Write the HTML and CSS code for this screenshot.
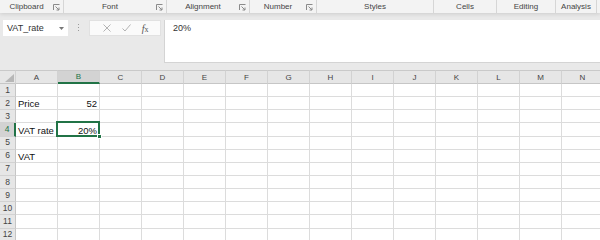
FILE: index.html
```html
<!DOCTYPE html>
<html>
<head>
    <meta charset="utf-8">
    <title>VAT</title>
    <link rel="stylesheet" href="styles.css">
</head>
<body>
    <div class="ribbon">
        <div class="group w-clip"><span class="label">Clipboard</span><svg class="launcher" width="7" height="7" viewBox="0 0 7 7"><path d="M0.5 6V0.5H6.5M2.5 2.5L6 6M6 3.5V6H3.5"/></svg></div>
        <div class="group w-font"><span class="label">Font</span><svg class="launcher" width="7" height="7" viewBox="0 0 7 7"><path d="M0.5 6V0.5H6.5M2.5 2.5L6 6M6 3.5V6H3.5"/></svg></div>
        <div class="group w-align"><span class="label">Alignment</span><svg class="launcher" width="7" height="7" viewBox="0 0 7 7"><path d="M0.5 6V0.5H6.5M2.5 2.5L6 6M6 3.5V6H3.5"/></svg></div>
        <div class="group w-num"><span class="label">Number</span><svg class="launcher" width="7" height="7" viewBox="0 0 7 7"><path d="M0.5 6V0.5H6.5M2.5 2.5L6 6M6 3.5V6H3.5"/></svg></div>
        <div class="group w-styles"><span class="label">Styles</span></div>
        <div class="group w-cells"><span class="label">Cells</span></div>
        <div class="group w-edit"><span class="label">Editing</span></div>
        <div class="group w-anal"><span class="label">Analysis</span></div>
    </div>

    <div class="formula-row">
        <div class="namebox">
            <span>VAT_rate</span>
            <svg width="5" height="3" viewBox="0 0 5 3"><path d="M0 0H5L2.5 3Z" fill="#777"/></svg>
        </div>
        <div class="dots"><i></i><i></i><i></i></div>
        <div class="fbuttons">
            <svg width="8" height="8" viewBox="0 0 8 8"><path d="M0.5 0.5L7.5 7.5M7.5 0.5L0.5 7.5" stroke="#b3b3b3" fill="none"/></svg>
            <svg width="9" height="8" viewBox="0 0 9 8"><path d="M0.5 4.5L3 7L8.5 0.5" stroke="#b3b3b3" fill="none"/></svg>
            <span class="fx"><i>f</i>x</span>
        </div>
        <div class="finput">20%</div>
    </div>

    <div class="sheet">
        <table>
            <colgroup>
                <col class="c-head"><col><col><col><col><col><col><col><col><col><col><col><col><col><col>
            </colgroup>
            <tr class="colhead">
                <td class="corner"><svg width="9" height="8" viewBox="0 0 9 8"><path d="M9 0V8H0Z" fill="#b7b7b7"/></svg></td>
                <td>A</td><td class="on">B</td><td>C</td><td>D</td><td>E</td><td>F</td><td>G</td><td>H</td><td>I</td><td>J</td><td>K</td><td>L</td><td>M</td><td>N</td>
            </tr>
            <tr><td class="rh">1</td><td></td><td></td><td></td><td></td><td></td><td></td><td></td><td></td><td></td><td></td><td></td><td></td><td></td><td></td></tr>
            <tr><td class="rh">2</td><td>Price</td><td class="num">52</td><td></td><td></td><td></td><td></td><td></td><td></td><td></td><td></td><td></td><td></td><td></td><td></td></tr>
            <tr><td class="rh">3</td><td></td><td></td><td></td><td></td><td></td><td></td><td></td><td></td><td></td><td></td><td></td><td></td><td></td><td></td></tr>
            <tr><td class="rh on">4</td><td>VAT rate</td><td class="num sel">20%<div class="selbox"><span class="handle"></span></div></td><td></td><td></td><td></td><td></td><td></td><td></td><td></td><td></td><td></td><td></td><td></td><td></td></tr>
            <tr><td class="rh">5</td><td></td><td></td><td></td><td></td><td></td><td></td><td></td><td></td><td></td><td></td><td></td><td></td><td></td><td></td></tr>
            <tr><td class="rh">6</td><td>VAT</td><td></td><td></td><td></td><td></td><td></td><td></td><td></td><td></td><td></td><td></td><td></td><td></td><td></td></tr>
            <tr><td class="rh">7</td><td></td><td></td><td></td><td></td><td></td><td></td><td></td><td></td><td></td><td></td><td></td><td></td><td></td><td></td></tr>
            <tr><td class="rh">8</td><td></td><td></td><td></td><td></td><td></td><td></td><td></td><td></td><td></td><td></td><td></td><td></td><td></td><td></td></tr>
            <tr><td class="rh">9</td><td></td><td></td><td></td><td></td><td></td><td></td><td></td><td></td><td></td><td></td><td></td><td></td><td></td><td></td></tr>
            <tr><td class="rh">10</td><td></td><td></td><td></td><td></td><td></td><td></td><td></td><td></td><td></td><td></td><td></td><td></td><td></td><td></td></tr>
            <tr><td class="rh">11</td><td></td><td></td><td></td><td></td><td></td><td></td><td></td><td></td><td></td><td></td><td></td><td></td><td></td><td></td></tr>
            <tr><td class="rh">12</td><td></td><td></td><td></td><td></td><td></td><td></td><td></td><td></td><td></td><td></td><td></td><td></td><td></td><td></td></tr>
        </table>
    </div>
</body>
</html>
```

FILE: styles.css
```css
*
{
    margin: 0;
    padding: 0;
    box-sizing: border-box;
}

body
{
    width: 600px;
    height: 240px;
    overflow: hidden;
    background-color: #e9e9e9;
    font-family: "Liberation Sans", Arial, sans-serif;
    color: #222;
}

/* ribbon group labels */
.ribbon
{
    display: flex;
    height: 13px;
    background-color: #f3f3f3;
    box-shadow: 0 1px 4px rgba(0, 0, 0, 0.13);
    position: relative;
}

.group
{
    display: flex;
    align-items: center;
    height: 13px;
    border-right: 1px solid #d6d6d6;
    padding-right: 3px;
}

.group .label
{
    flex: 1;
    text-align: center;
    font-size: 8px;
    color: #444;
    line-height: 13px;
}

.launcher
{
    width: 7px;
    height: 7px;
    margin-top: 1px;
}
.launcher path
{
    stroke: #8a8a8a;
    fill: none;
}

.w-clip { width: 64px; }
.w-font { width: 103px; }
.w-align { width: 83px; }
.w-num { width: 67px; }
.w-styles { width: 117px; padding-right: 0; }
.w-cells { width: 63px; padding-right: 0; }
.w-edit { width: 59px; padding-right: 0; }
.w-anal { width: 41px; padding-right: 0; }

/* formula bar */
.formula-row
{
    display: flex;
    align-items: flex-start;
    height: 43px;
    margin-top: 7px;
    padding-left: 3px;
}

.namebox
{
    display: flex;
    align-items: center;
    justify-content: space-between;
    width: 65px;
    height: 16px;
    padding: 0 4px 0 4px;
    background-color: #fff;
    font-size: 9px;
    color: #333;
}

.dots
{
    display: flex;
    flex-direction: column;
    align-items: center;
    gap: 2px;
    width: 21px;
    padding-top: 4px;
}
.dots i
{
    width: 1px;
    height: 1px;
    background-color: #9a9a9a;
}

.fbuttons
{
    display: flex;
    align-items: center;
    justify-content: space-around;
    width: 72px;
    height: 16px;
    padding: 0 6px 0 8px;
    background-color: #fafafa;
    border: 1px solid #e1e1e1;
}

.fx
{
    font-family: "Liberation Serif", serif;
    font-size: 8px;
    color: #555;
}
.fx i
{
    font-size: 10px;
}

.finput
{
    flex: 1;
    height: 43px;
    margin-left: 3px;
    padding: 3px 8px;
    background-color: #fff;
    border-left: 1px solid #d4d4d4;
    border-bottom: 1px solid #d4d4d4;
    font-size: 9px;
    color: #333;
}

/* worksheet */
.sheet
{
    margin-top: 7px;
    background-color: #fff;
}

table
{
    width: 604px;
    table-layout: fixed;
    border-collapse: separate;
    border-spacing: 0;
}

col
{
    width: 42px;
}
col.c-head
{
    width: 16px;
}

tr
{
    height: 13.15px;
}

td
{
    border-right: 1px solid #dcdcdc;
    border-bottom: 1px solid #dcdcdc;
    font-size: 9.5px;
    line-height: 11px;
    padding: 0 2px;
    vertical-align: bottom;
    white-space: nowrap;
    overflow: visible;
    color: #111;
}

td.num
{
    text-align: right;
}

.colhead
{
    height: 13px;
}
.colhead td
{
    background-color: #e6e6e6;
    border-top: 1px solid #c9c9c9;
    border-right: 1px solid #d2d2d2;
    border-bottom: 1px solid #c6c6c6;
    text-align: center;
    vertical-align: middle;
    font-size: 8px;
    color: #444;
}
.colhead td.on
{
    background-color: #d3d3d3;
    border-bottom: 2px solid #217346;
    color: #217346;
}

td.corner
{
    text-align: right;
    vertical-align: bottom;
    padding: 0 1px 1px 0;
    line-height: 0;
}

td.rh
{
    background-color: #e6e6e6;
    border-right: 1px solid #c6c6c6;
    border-bottom: 1px solid #d2d2d2;
    text-align: center;
    vertical-align: middle;
    font-size: 8.5px;
    color: #444;
    padding: 0;
}
td.rh.on
{
    background-color: #d3d3d3;
    border-right: 2px solid #217346;
    color: #217346;
}

td.sel
{
    position: relative;
}

.selbox
{
    position: absolute;
    left: -2px;
    top: -2px;
    right: -1px;
    bottom: -1px;
    border: 2px solid #217346;
}

.handle
{
    position: absolute;
    right: -4px;
    bottom: -4px;
    width: 5px;
    height: 5px;
    background-color: #217346;
    border: 1px solid #fff;
}
```
